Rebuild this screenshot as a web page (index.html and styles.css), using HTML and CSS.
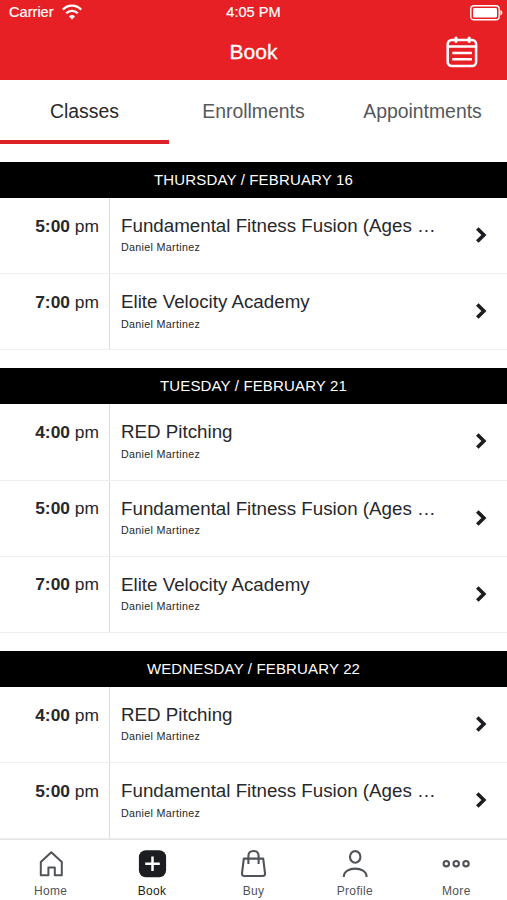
FILE: index.html
```html
<!DOCTYPE html>
<html lang="en">
<head>
    <meta charset="UTF-8">
    <meta name="viewport" content="width=device-width, initial-scale=1.0">
    <title>Book</title>
    <link rel="stylesheet" href="styles.css">
</head>
<body>
    <svg class="symbols" width="0" height="0">
        <symbol id="chevron" viewBox="0 0 12 18">
            <path d="M2.3 2.4 L8.9 9 L2.3 15.6" fill="none" stroke="#1c1d20" stroke-width="3.6"/>
        </symbol>
    </svg>

    <header class="header">
        <div class="status-bar">
            <div class="carrier">
                <span>Carrier</span>
                <svg width="20" height="16" viewBox="0 0 20 16" fill="none" stroke="#fff" stroke-width="2.3">
                    <path d="M0.8 5.6 C6 0.3 14 0.3 19.2 5.6"/>
                    <path d="M4.2 9.2 C7.4 6 12.6 6 15.8 9.2"/>
                    <path d="M10 15.4 L7 12.4 Q10 9.6 13 12.4 Z" fill="#fff" stroke="none"/>
                </svg>
            </div>
            <span class="clock">4:05 PM</span>
            <div class="battery">
                <svg width="33" height="16" viewBox="0 0 33 16">
                    <rect x="0.8" y="0.8" width="28.4" height="14" rx="3.4" fill="none" stroke="#fff" stroke-width="1.4"/>
                    <rect x="3" y="3" width="24" height="9.6" rx="1.4" fill="#fff"/>
                    <path d="M30.4 5 Q32.4 5.6 32.4 7.8 Q32.4 10 30.4 10.6 Z" fill="#fff"/>
                </svg>
            </div>
        </div>
        <div class="title-bar">
            <h1>Book</h1>
            <svg class="calendar" width="32" height="32" viewBox="0 0 32 32" fill="none" stroke="#fff" stroke-width="2.5" stroke-linecap="round">
                <rect x="1.7" y="4" width="28.4" height="26" rx="4"/>
                <path d="M2 10.6 H30"/>
                <path d="M10 2.2 V5.3 M23.2 2.2 V5.3" stroke-width="3.2"/>
                <path d="M6.3 17 H25.9 M6.3 23.2 H25.9" stroke-linecap="butt"/>
            </svg>
        </div>
    </header>

    <nav class="tabs">
        <a class="tab active">Classes</a>
        <a class="tab">Enrollments</a>
        <a class="tab">Appointments</a>
    </nav>

    <main class="schedule">
        <section class="day">
            <h2>THURSDAY / FEBRUARY 16</h2>
            <div class="row">
                <div class="time"><b>5:00</b> pm</div>
                <div class="info">
                    <div class="name">Fundamental Fitness Fusion (Ages …</div>
                    <div class="coach">Daniel Martinez</div>
                </div>
                <svg class="chevron"><use href="#chevron"/></svg>
            </div>
            <div class="row">
                <div class="time"><b>7:00</b> pm</div>
                <div class="info">
                    <div class="name">Elite Velocity Academy</div>
                    <div class="coach">Daniel Martinez</div>
                </div>
                <svg class="chevron"><use href="#chevron"/></svg>
            </div>
        </section>

        <section class="day">
            <h2>TUESDAY / FEBRUARY 21</h2>
            <div class="row">
                <div class="time"><b>4:00</b> pm</div>
                <div class="info">
                    <div class="name">RED Pitching</div>
                    <div class="coach">Daniel Martinez</div>
                </div>
                <svg class="chevron"><use href="#chevron"/></svg>
            </div>
            <div class="row">
                <div class="time"><b>5:00</b> pm</div>
                <div class="info">
                    <div class="name">Fundamental Fitness Fusion (Ages …</div>
                    <div class="coach">Daniel Martinez</div>
                </div>
                <svg class="chevron"><use href="#chevron"/></svg>
            </div>
            <div class="row">
                <div class="time"><b>7:00</b> pm</div>
                <div class="info">
                    <div class="name">Elite Velocity Academy</div>
                    <div class="coach">Daniel Martinez</div>
                </div>
                <svg class="chevron"><use href="#chevron"/></svg>
            </div>
        </section>

        <section class="day">
            <h2>WEDNESDAY / FEBRUARY 22</h2>
            <div class="row">
                <div class="time"><b>4:00</b> pm</div>
                <div class="info">
                    <div class="name">RED Pitching</div>
                    <div class="coach">Daniel Martinez</div>
                </div>
                <svg class="chevron"><use href="#chevron"/></svg>
            </div>
            <div class="row">
                <div class="time"><b>5:00</b> pm</div>
                <div class="info">
                    <div class="name">Fundamental Fitness Fusion (Ages …</div>
                    <div class="coach">Daniel Martinez</div>
                </div>
                <svg class="chevron"><use href="#chevron"/></svg>
            </div>
        </section>
    </main>

    <nav class="bottom-nav">
        <a class="nav-item">
            <svg width="30" height="30" viewBox="0 0 30 30" fill="none" stroke="#505357" stroke-width="2">
                <path d="M4.8 13 L15.3 3.3 L25.8 13 V26.3 H18.8 V18.6 H12.4 V26.3 H4.8 Z" stroke-linejoin="round"/>
            </svg>
            <span>Home</span>
        </a>
        <a class="nav-item active">
            <svg width="30" height="30" viewBox="0 0 30 30">
                <rect x="1.9" y="1.2" width="27.2" height="27" rx="7" fill="#1c1d20"/>
                <path d="M15.5 7.5 V22 M8.2 14.7 H22.8" stroke="#fff" stroke-width="2.5"/>
            </svg>
            <span>Book</span>
        </a>
        <a class="nav-item">
            <svg width="30" height="30" viewBox="0 0 30 30" fill="none" stroke="#505357" stroke-width="2.1">
                <path d="M5.8 9.6 H25.2 L27 24.2 Q27.3 27 24.6 27 H6.4 Q3.7 27 4 24.2 Z" stroke-linejoin="round"/>
                <path d="M10.4 15 V7 Q10.4 2 15.5 2 Q20.6 2 20.6 7 V15"/>
            </svg>
            <span>Buy</span>
        </a>
        <a class="nav-item">
            <svg width="30" height="30" viewBox="0 0 30 30" fill="none" stroke="#505357" stroke-width="2.1">
                <ellipse cx="15.2" cy="7.9" rx="5.2" ry="5.8"/>
                <path d="M3.8 28 C3.8 16.8 26.6 16.8 26.6 28"/>
            </svg>
            <span>Profile</span>
        </a>
        <a class="nav-item">
            <svg width="30" height="30" viewBox="0 0 30 30" fill="none" stroke="#505357" stroke-width="2.1">
                <circle cx="5.3" cy="14.7" r="2.7"/>
                <circle cx="15.2" cy="14.7" r="2.7"/>
                <circle cx="25" cy="14.7" r="2.7"/>
            </svg>
            <span>More</span>
        </a>
    </nav>
</body>
</html>
```
FILE: styles.css
```css
* {
    box-sizing: border-box;
}
body {
    font-family: "Liberation Sans", Arial, sans-serif;
    background-color: #fff;
    color: #27282b;
    margin: 0;
    height: 900px;
    display: flex;
    flex-direction: column;
    overflow: hidden;
}
h1, h2 {
    margin: 0;
    font-weight: normal;
}
.symbols {
    display: none;
}

.header {
    background-color: #e62024;
    color: white;
    height: 80px;
    flex: none;
}
.status-bar {
    display: grid;
    grid-template-columns: 1fr auto 1fr;
    align-items: center;
    height: 24px;
    padding: 0 4px 0 9px;
    font-size: 14.6px;
    -webkit-text-stroke: 0.2px white;
}
.carrier {
    display: flex;
    align-items: center;
    gap: 8px;
}
.clock {
    padding-right: 5px;
}
.battery {
    display: flex;
    justify-content: flex-end;
    padding-top: 1px;
}
.title-bar {
    display: grid;
    grid-template-columns: 1fr auto 1fr;
    align-items: center;
    height: 56px;
}
.title-bar h1 {
    grid-column: 2;
    font-size: 21px;
    -webkit-text-stroke: 0.3px white;
}
.calendar {
    justify-self: end;
    margin-right: 29px;
}

.tabs {
    display: grid;
    grid-template-columns: repeat(3, 1fr);
    height: 64px;
    flex: none;
}
.tab {
    display: flex;
    align-items: center;
    justify-content: center;
    font-size: 19.4px;
    color: #55585c;
    border-bottom: 4px solid transparent;
    padding-top: 3px;
}
.tab.active {
    color: #27282b;
    border-bottom-color: #dd2227;
}

.schedule {
    flex: 1;
    padding-top: 18px;
    overflow: hidden;
}
.day {
    margin-bottom: 18.2px;
}
.day h2 {
    background-color: #000;
    color: white;
    height: 36px;
    line-height: 36px;
    text-align: center;
    font-size: 15px;
    letter-spacing: 0.15px;
}
.row {
    display: flex;
    height: 76.15px;
    border-bottom: 1px solid #eee;
}
.time {
    width: 110px;
    border-right: 1px solid #dcdcdc;
    padding: 16.5px 10px 0 0;
    text-align: right;
    font-size: 17.4px;
    line-height: 22px;
}
.info {
    flex: 1;
    padding: 17px 0 0 11px;
}
.name {
    font-size: 18.75px;
    line-height: 22px;
    white-space: nowrap;
}
.coach {
    font-size: 10.7px;
    letter-spacing: 0.33px;
    line-height: 14px;
    margin-top: 3.4px;
}
.chevron {
    width: 12px;
    height: 18px;
    margin: 28px 20px 0 0;
}

.bottom-nav {
    display: grid;
    grid-template-columns: repeat(5, 1fr);
    height: 61px;
    flex: none;
    border-top: 1px solid #e4e4e4;
    background-color: white;
}
.nav-item {
    display: flex;
    flex-direction: column;
    align-items: center;
    padding-top: 9px;
    color: #505357;
    font-size: 12px;
    letter-spacing: 0.35px;
}
.nav-item span {
    line-height: 14px;
    margin-top: 5px;
}
.nav-item.active {
    color: #1c1d20;
}
```
